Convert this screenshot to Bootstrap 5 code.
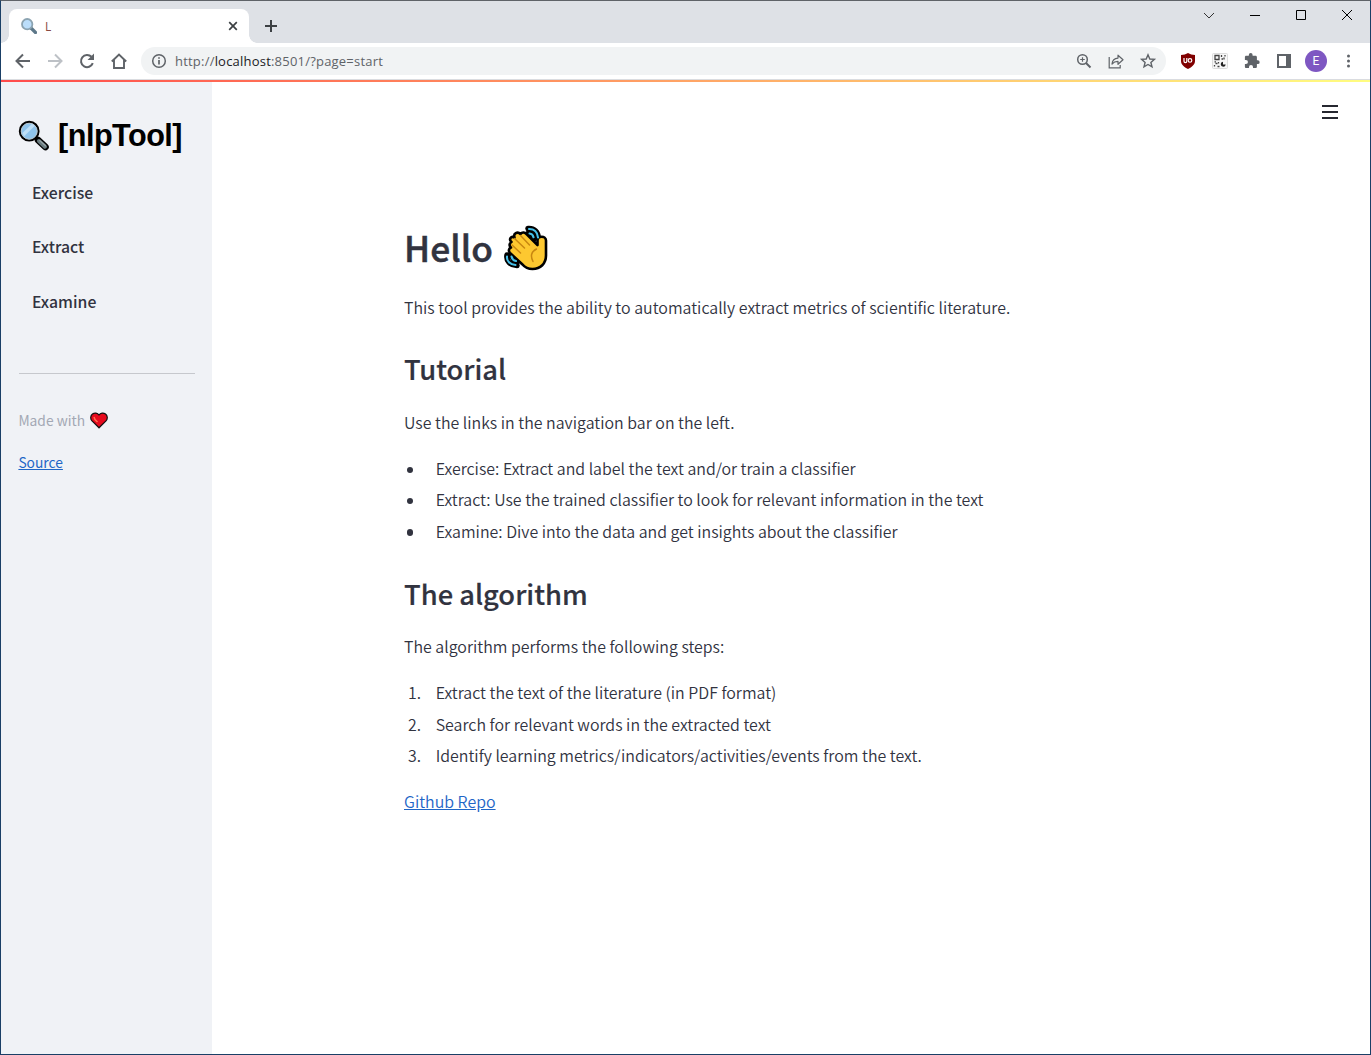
<!DOCTYPE html>
<html lang="en">
<head>
<meta charset="utf-8">
<title>nlpTool</title>
<link rel="stylesheet" href="https://cdn.jsdelivr.net/npm/bootstrap@5.3.0/dist/css/bootstrap.min.css">
<script src="https://cdn.jsdelivr.net/npm/bootstrap@5.3.0/dist/js/bootstrap.bundle.min.js"></script>
<style>
body{width:1371px;height:1055px;overflow:hidden;background:#fff;color:#31333f;font-family:"Noto Sans CJK SC",sans-serif;font-size:15.95px;line-height:28px}
.win{width:1371px;height:1055px;border:1px solid #1a3f66;border-top-color:#5f6368}
svg{display:block;flex:none}
.strip{height:42px;background:#dee1e6;padding:8px 0 0 8px}
.tab1{width:240px;height:34px;background:#fff;border-radius:8px 8px 0 0;padding:0 10px 0 12px;font:12px "Open Sans",sans-serif;position:relative}
.tab1::before,.tab1::after{content:"";position:absolute;bottom:0;width:8px;height:8px}
.tab1::before{left:-8px;background:radial-gradient(circle at 0 0,#dee1e6 7.5px,#fff 8px)}
.tab1::after{right:-8px;background:radial-gradient(circle at 100% 0,#dee1e6 7.5px,#fff 8px)}
.tabname{margin-left:8px;color:#8a4a42}
.newtab{margin:8px 0 0 15px}
.wctl{gap:28px;padding:5px 14px 0 0;margin-top:-8px}
.tools{height:36px;padding:0 10px 0 12px}
.navset{gap:12px}
.omni{width:1025px;height:28px;border-radius:14px;background:#f1f3f4;margin-left:12px;padding:0 8px 0 8px;font:13px "Open Sans",sans-serif;color:#5f6368}
.url{margin-left:6px;letter-spacing:.21px;white-space:pre}
.url b{font-weight:400;color:#202124}
.exts{gap:12px;margin-left:12px}
.avatar{width:22px;height:22px;border-radius:50%;background:#7e57c2;color:#fff;font:12px/22px Roboto,sans-serif;text-align:center;margin:0 -1px}
.edge{height:3px;border-top:1px solid #dadce0;background:linear-gradient(90deg,#ff4b4b,#fffd80)}
.side{width:211px;background:#f0f2f6;padding:33px 17px 0}
.brand{font:bold 30.6px/40px "Liberation Sans",sans-serif;color:#000;gap:9px;letter-spacing:-.5px}
.side nav{padding:24px 0 0 14px;font-weight:500;font-size:15.8px}
.side nav a{color:#31333f;text-decoration:none;height:54.4px;line-height:28px}
.side hr{margin:31px 0 0 1px;border-top:1px solid #c6c8cd;opacity:1}
.foot{font-size:13.8px;line-height:24px;color:#a3a8b4;padding:34px 0 0 .4px}
.foot svg{margin-left:5px}
.foot a{margin-top:18px}
.foot a,.doc a{color:#1f66c7}
.doc{padding:140px 0 0 192px;position:relative;font-weight:350}
.doc h1{font-size:35.3px;line-height:46px;height:48px;padding-top:2px;font-weight:500;margin:0;gap:12px;-webkit-text-stroke:.5px #31333f}
.doc h1 svg{margin-top:2px;margin-left:-1px}
.doc h2{font-size:27.3px;line-height:36px;font-weight:500;margin:29px 0 22px;-webkit-text-stroke:.2px #31333f}
.doc h2.second{margin:26.8px 0 21px}
.doc p{margin:0}
.doc h1+p{margin-top:23px}
.doc ol+p{margin-top:14px}
.doc ul,.doc ol{margin:18px 0 0;padding:0;list-style:none}
.doc ul li{height:31.4px}
.doc ol li{height:31.6px}
.mk{width:31.7px;flex:none}
.dot{width:6.4px;height:6.4px;border-radius:50%;background:#31333f;margin:12.6px 0 0 3px}
.num{padding-left:4px}
.burger{position:absolute;right:32px;top:23px}
</style>
</head>
<body>
<div class="win d-flex flex-column">
  <div class="strip d-flex">
    <div class="tab1 d-flex align-items-center">
      <svg width="16" height="16" viewBox="0 0 16 16"><path d="M10 10l4.500 4.500" stroke="#5d7889" stroke-width="3.200" stroke-linecap="round"/><circle cx="6.200" cy="6.200" r="5.200" fill="#bbdefb" stroke="#8ba3b1" stroke-width="1.800"/></svg>
      <span class="tabname">L</span>
      <svg class="ms-auto" width="12" height="12" viewBox="0 0 12 12"><path d="M2.200 2.200l7.600 7.600M9.800 2.200l-7.600 7.600" stroke="#3c4043" stroke-width="1.700"/></svg>
    </div>
    <svg class="newtab" width="14" height="18" viewBox="0 0 14 18"><path d="M1 9h12M7 3v12" stroke="#3c4043" stroke-width="2"/></svg>
    <div class="wctl d-flex ms-auto">
      <svg width="18" height="18" viewBox="0 0 18 18"><path d="M4 7l5 5 5-5" fill="none" stroke="#333"/></svg>
      <svg width="18" height="18" viewBox="0 0 18 18"><path d="M4 9.500h10" stroke="#000"/></svg>
      <svg width="18" height="18" viewBox="0 0 18 18"><path d="M4.500 4.500h9v9h-9z" fill="none" stroke="#000"/></svg>
      <svg width="18" height="18" viewBox="0 0 18 18"><path d="M4 4l10 10M14 4L4 14" stroke="#000"/></svg>
    </div>
  </div>
  <div class="tools d-flex align-items-center">
    <div class="navset d-flex">
      <svg width="20" height="20" viewBox="0 0 20 20"><path d="M17 10H4M10 3.500L3.500 10l6.500 6.500" fill="none" stroke="#5f6368" stroke-width="2"/></svg>
      <svg width="20" height="20" viewBox="0 0 20 20"><path d="M3 10h13M10 3.500l6.500 6.500-6.500 6.500" fill="none" stroke="#bdc1c6" stroke-width="2"/></svg>
      <svg width="20" height="20" viewBox="0 0 20 20"><path d="M15.800 12.200A6.100 6.100 0 1 1 14.500 5.800" fill="none" stroke="#5f6368" stroke-width="2"/><path d="M17 2.500V9h-6.500z" fill="#5f6368"/></svg>
      <svg width="20" height="20" viewBox="0 0 20 20"><path d="M2.800 10.500L10 3.500l7.200 7M5 9v8h10V9" fill="none" stroke="#5f6368" stroke-width="1.900"/></svg>
    </div>
    <div class="omni d-flex align-items-center">
      <svg width="20" height="20" viewBox="0 0 20 20"><circle cx="10" cy="10" r="6.300" fill="none" stroke="#5f6368" stroke-width="1.500"/><path d="M10 9v4.500M10 6.200v1.600" stroke="#5f6368" stroke-width="1.700"/></svg>
      <span class="url">http://<b>localhost</b>:8501/?page=start</span>
      <div class="d-flex ms-auto navset">
        <svg width="20" height="20" viewBox="0 0 20 20"><circle cx="8.500" cy="8.500" r="4.800" fill="none" stroke="#5f6368" stroke-width="1.500"/><path d="M12 12l4.500 4.500" stroke="#5f6368" stroke-width="1.900"/><path d="M8.500 6.200v4.600M6.200 8.500h4.600" stroke="#5f6368" stroke-width="1.200"/></svg>
        <svg width="20" height="20" viewBox="0 0 20 20" fill="none" stroke="#5f6368" stroke-width="1.200"><path d="M3.200 6v10.800h11V14"/><path d="M6 13c.4-4 2.500-5.700 6-5.900V4.200L17 8.800l-5 4.500v-2.900c-2.800 0-4.500.8-6 2.600z" stroke-linejoin="round"/></svg>
        <svg width="20" height="20" viewBox="0 0 20 20"><path d="M10 3.800l1.800 4.200 4.600.4-3.500 3 1.100 4.500-4-2.400-4 2.400 1.100-4.500-3.500-3L8.200 8z" fill="none" stroke="#5f6368" stroke-width="1.400"/></svg>
      </div>
    </div>
    <div class="exts d-flex align-items-center">
      <svg width="20" height="20" viewBox="0 0 20 20"><path d="M10 2c2 1.300 4.400 2 7 2v6c0 3.500-3 6-7 8-4-2-7-4.500-7-8V4c2.600 0 5-.7 7-2z" fill="#800000"/><path d="M6 7v3.200a1.400 1.400 0 0 0 2.800 0V7" fill="none" stroke="#fff" stroke-width="1.200"/><circle cx="12" cy="9.400" r="1.800" fill="none" stroke="#fff" stroke-width="1.200"/></svg>
      <svg width="20" height="20" viewBox="0 0 20 20"><rect x="2.500" y="2.500" width="15" height="15" rx="1" fill="#f7f7f7" stroke="#dcdcdc"/><path d="M5 4.500h4v4H5zM11.500 4v2M11.500 8h1.500M15 4v1.500M14 6.500v2M4.500 10.800h1.500M5.500 12.500h2M8.500 11v1.500M4.500 15.500v-1.500M7.500 15.500h2" fill="none" stroke="#444" stroke-width="1.300"/><path d="M13 10.800a2.500 2.500 0 1 0 2.700 2.700h-2.700z" fill="#222"/></svg>
      <svg width="20" height="20" viewBox="0 0 20 20"><path d="M15.800 9.300h-.9V6.200c0-.8-.6-1.400-1.400-1.400h-2.900v-.9a1.900 1.900 0 0 0-3.800 0v.9H4.200c-.8 0-1.300.6-1.300 1.400v2.700h1a2 2 0 0 1 0 4.100h-1v2.700c0 .8.500 1.400 1.300 1.400H7v-1a2 2 0 0 1 4 0v1h2.500c.8 0 1.400-.6 1.400-1.400V13h.9a1.850 1.850 0 0 0 0-3.700z" fill="#5f6368"/></svg>
      <svg width="20" height="20" viewBox="0 0 20 20"><path d="M3 3h14v14H3z" fill="#5f6368"/><path d="M5 5h7v10H5z" fill="#fff"/></svg>
      <div class="avatar">E</div>
      <svg width="20" height="20" viewBox="0 0 20 20" fill="#5f6368"><circle cx="10.500" cy="5" r="1.500"/><circle cx="10.500" cy="10" r="1.500"/><circle cx="10.500" cy="15" r="1.500"/></svg>
    </div>
  </div>
  <div class="edge"></div>
  <div class="d-flex flex-grow-1">
    <aside class="side">
      <div class="brand d-flex align-items-center">
        <svg width="31" height="31" viewBox="0 0 31 31"><path d="M20 20l7.500 7" stroke="#000" stroke-width="6.600" stroke-linecap="round"/><path d="M17 17l3 3" stroke="#000" stroke-width="3"/><path d="M21 21l6 5.700" stroke="#687a7e" stroke-width="4" stroke-linecap="round"/><path d="M21.800 20.600l5.700 5.200" stroke="#9aa6a8" stroke-width="1.200" stroke-linecap="round"/><circle cx="11.200" cy="11.200" r="9.300" fill="#8fc4ec" stroke="#000" stroke-width="2.200"/><circle cx="11.200" cy="11.200" r="8" fill="none" stroke="#b9c5cc" stroke-width="1"/><path d="M4.400 12.900L13.900 4.100l3 1.600L5.900 16.400z" fill="#bfe0f8"/></svg>
        <span>[nlpTool]</span>
      </div>
      <nav class="d-flex flex-column"><a href="#">Exercise</a><a href="#">Extract</a><a href="#">Examine</a></nav>
      <hr>
      <div class="foot">
        <div class="d-flex align-items-center">Made with
          <svg width="18" height="17" viewBox="0 0 18 17"><path d="M9 15.800L2 8.900C.1 6.900.4 3.600 2.500 2 4.500.6 7.500.8 9 3c1.500-2.200 4.500-2.400 6.500-1 2.100 1.600 2.400 4.900.5 6.900z" fill="#e60a1c" stroke="#111" stroke-width="1.200"/><path d="M4 5l1 2.500 2.500 2.500" fill="none" stroke="#ff6e50" stroke-width="1.500"/></svg>
        </div>
        <a class="d-inline-block" href="#">Source</a>
      </div>
    </aside>
    <main class="doc flex-grow-1">
      <svg class="burger" width="16" height="14" viewBox="0 0 16 14"><path d="M0 1h16M0 7h16M0 13h16" stroke="#262730" stroke-width="2"/></svg>
      <h1 class="d-flex align-items-center">Hello
        <svg width="44" height="46" viewBox="0 0 44 46">
          <g fill="none" stroke-linecap="round" stroke="#000" stroke-width="5.500"><path d="M24 3.500c6-.5 10 3 10.500 10M24 8.500c4-.2 5.500 2 5.500 6M3 30c-1 6 3 10 10 10.500M8 30c0 4 2.500 5.500 6 6"/></g>
          <path d="M7.500 17c-3-2.500-.5-6.500 3-4.500-1.500-4 3-6.500 6-3.500 2-2.500 4.500-1.500 6.500.5L33.500 20v-4.500c0-5 8.500-5 8.500 0v15c0 8-5.500 13.500-13.500 13.500-4 0-7.500-1.500-10-4.500L6 28c-2-2-1-5 1-5.500-2-1.500-2-4 .5-5.500z" fill="#fdc830" stroke="#000" stroke-width="2.600" stroke-linejoin="round"/>
          <g fill="none" stroke="#45bfe8" stroke-width="2.100" stroke-linecap="round"><path d="M25 4c5-.2 8.500 3 9 8.500M25.500 8.500c2.500.2 3.500 1.500 4 3.800M3 31.500c-.5 4.500 3 8 8.500 8.500M7.500 31.500c.5 2.500 2 4 4.500 4.500"/></g>
          <g fill="none" stroke="#c88710" stroke-width="1.500" stroke-linecap="round"><path d="M10.500 13.500l10 9.500M16.500 10.500l9 9.500M8 20l8.500 8M32.500 24c-5 2.500-6.500 6.500-3.500 12.500"/></g>
        </svg>
      </h1>
      <p>This tool provides the ability to automatically extract metrics of scientific literature.</p>
      <h2>Tutorial</h2>
      <p>Use the links in the navigation bar on the left.</p>
      <ul>
        <li class="d-flex"><span class="mk"><span class="dot d-block"></span></span>Exercise: Extract and label the text and/or train a classifier</li>
        <li class="d-flex"><span class="mk"><span class="dot d-block"></span></span>Extract: Use the trained classifier to look for relevant information in the text</li>
        <li class="d-flex"><span class="mk"><span class="dot d-block"></span></span>Examine: Dive into the data and get insights about the classifier</li>
      </ul>
      <h2 class="second">The algorithm</h2>
      <p>The algorithm performs the following steps:</p>
      <ol>
        <li class="d-flex"><span class="mk num">1.</span>Extract the text of the literature (in PDF format)</li>
        <li class="d-flex"><span class="mk num">2.</span>Search for relevant words in the extracted text</li>
        <li class="d-flex"><span class="mk num">3.</span>Identify learning metrics/indicators/activities/events from the text.</li>
      </ol>
      <p><a href="#">Github Repo</a></p>
    </main>
  </div>
</div>
</body>
</html>
